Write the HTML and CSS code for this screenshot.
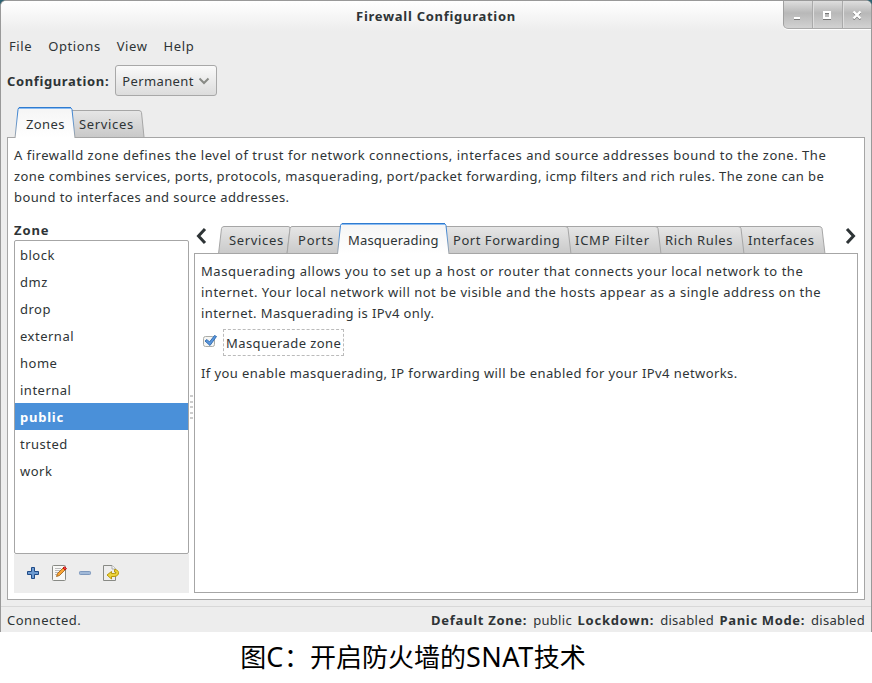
FILE: index.html
```
<!DOCTYPE html>
<html lang="zh">
<head>
<meta charset="utf-8">
<title>Firewall Configuration</title>
<link rel="stylesheet" href="styles.css">
</head>
<body>
<div class="desktop">
<main class="window">
  <header class="titlebar">
    <h1 class="title">Firewall Configuration</h1>
    <div class="controls">
      <span class="control"><svg width="10" height="10"><path d="M1 9.500h6" stroke="#777"/><path d="M1 8h6" stroke="#fff" stroke-width="2"/></svg></span>
      <span class="control"><svg width="10" height="10"><path d="M1 9.500h8M3 3.500h4" stroke="#777"/><path d="M2 2h6v6H2z" fill="none" stroke="#fff" stroke-width="2"/></svg></span>
      <span class="control"><svg width="10" height="10"><path d="M1.500 2.500l7 7m0-7l-7 7" stroke="#777" stroke-width="2"/><path d="M1.500 1.500l7 7m0-7l-7 7" stroke="#fff" stroke-width="2.400"/></svg></span>
    </div>
  </header>
  <nav class="menu"><span>File</span><span>Options</span><span>View</span><span>Help</span></nav>
  <div class="config">
    <b>Configuration:</b>
    <button class="combo"><span>Permanent</span><svg width="12" height="8"><path d="M1.500 1.500L6 6l4.500-4.500" fill="none" stroke="#888a85" stroke-width="2"/></svg></button>
  </div>
  <svg class="maintabs" width="858" height="32">
    <defs>
      <linearGradient id="tab" x2="0" y2="1"><stop stop-color="#e6e6e6"/><stop offset="1" stop-color="#c9c9c9"/></linearGradient>
      <linearGradient id="edge" x2="0" y2="1"><stop stop-color="#2f7bd0"/><stop offset=".4" stop-color="#5591d2"/><stop offset="1" stop-color="#a6a6a6"/></linearGradient>
      <linearGradient id="active" x2="0" y2="1"><stop stop-color="#f5f5f5"/><stop offset="1" stop-color="#fff"/></linearGradient>
    </defs>
    <path d="M60 31V4.500H132q2 0 2.500 2L137 31" fill="url(#tab)" stroke="#a6a6a6"/>
    <path d="M0 31.500H858" stroke="#a6a6a6"/>
    <path d="M8 32L11 3.500Q11.200 1.500 13 1.500H62Q64.500 1.500 65 3.500L68 32" fill="url(#active)" stroke="url(#edge)"/>
    <path d="M12 2.500H64" stroke="#8bbcf2"/><path d="M12 1.500H64" stroke="#2f7bd0"/>
    <text class="t-zones" x="19" y="23">Zones</text><text class="t-serv" x="72" y="23">Services</text>
  </svg>
  <section class="page">
    <p class="intro"><span class="i1">A firewalld zone defines the level of trust for network connections, interfaces and source addresses bound to the zone. The</span><br><span class="i2">zone combines services, ports, protocols, masquerading, port/packet forwarding, icmp filters and rich rules. The zone can be</span><br><span class="i3">bound to interfaces and source addresses.</span></p>
    <div class="panes">
      <aside class="side">
        <b class="zone">Zone</b>
        <ul class="zones"><li>block</li><li>dmz</li><li>drop</li><li>external</li><li>home</li><li>internal</li><li class="selected">public</li><li>trusted</li><li>work</li></ul>
        <div class="tools">
          <svg width="18" height="18" viewBox="0 0 18 18"><path d="M7.500 3.500h3v4h4v3h-4v4h-3v-4h-4v-3h4z" fill="#6d9bd1" stroke="#204a87" stroke-linejoin="round"/></svg>
          <svg width="18" height="18" viewBox="0 0 18 18"><rect x="2.500" y="1.500" width="13" height="15" rx="1" fill="#f8f8f6" stroke="#888a85"/><path d="M5 4.500h6M5 6.500h5M5 8.500h4M5 10.500h2" stroke="#bbb"/><path d="M6.500 12.500l1-3 6-6 2 2-6 6z" fill="#f9a535" stroke="#9a5a12" stroke-width=".8"/><path d="M13 4l1.500-1.300 2 2L15 6z" fill="#ef4040" stroke="#b00" stroke-width=".8"/></svg>
          <svg width="18" height="18" viewBox="0 0 18 18"><rect x="3.500" y="7.500" width="11" height="3" rx=".8" fill="#a1b9d8" stroke="#7d98bd"/></svg>
          <svg width="18" height="18" viewBox="0 0 18 18"><path d="M1.500 1.500h8.500l3.500 3.500v11.500h-12z" fill="#eee" stroke="#888a85"/><path d="M10 1.500v3.500h3.500" fill="#fff" stroke="#aaa"/><path d="M12.500 5.500c5.500 0 5.500 7-.5 7H9.500v2.500L5 11 9.500 7.500v2h3c2 0 2-1.500 0-1.500z" fill="#edd43a" stroke="#b19000" stroke-width=".9"/></svg>
        </div>
      </aside>
      <div class="grip"><i></i><i></i><i></i><i></i><i></i></div>
      <section class="detail">
        <svg class="subtabs" width="664" height="33">
          <path d="M24.500 32L27.500 6.500Q28 4.500 30 4.500H94Q96.500 4.500 96 6.500L93 32" fill="url(#tab)" stroke="#a6a6a6"/>
          <path d="M93 32L96 6.500Q96.500 4.500 98 4.500H160V32" fill="url(#tab)" stroke="#a6a6a6"/>
          <path d="M540 32V4.500H625Q627.500 4.500 628 6.500L631 32" fill="url(#tab)" stroke="#a6a6a6"/>
          <path d="M450 32V4.500H544Q546.500 4.500 547 6.500L550 32" fill="url(#tab)" stroke="#a6a6a6"/>
          <path d="M360 32V4.500H461Q463.500 4.500 464 6.500L467 32" fill="url(#tab)" stroke="#a6a6a6"/>
          <path d="M240 32V4.500H371Q373.500 4.500 374 6.500L377 32" fill="url(#tab)" stroke="#a6a6a6"/>
          <path d="M0 31.500H664" stroke="#a6a6a6"/>
          <path d="M143.500 32L146.500 3.500Q147 1.500 149 1.500H249Q251.500 1.500 252 3.500L255 32" fill="url(#active)" stroke="url(#edge)"/>
          <path d="M148 2.500H251" stroke="#8bbcf2"/><path d="M148 1.500H251" stroke="#2f7bd0"/>
          <path d="M11 7L4.500 14 11 21M653 7l6.500 7L653 21" fill="none" stroke="#2e3436" stroke-width="3"/>
          <text class="t-serv" x="35" y="23">Services</text><text class="t-ports" x="104" y="23">Ports</text><text class="t-masq" x="154" y="23">Masquerading</text><text class="t-fwd" x="259" y="23">Port Forwarding</text><text class="t-icmp" x="381" y="23">ICMP Filter</text><text class="t-rich" x="471" y="23">Rich Rules</text><text class="t-int" x="554" y="23">Interfaces</text>
        </svg>
        <div class="content">
          <p><span class="m1">Masquerading allows you to set up a host or router that connects your local network to the</span><br><span class="m2">internet. Your local network will not be visible and the hosts appear as a single address on the</span><br><span class="m3">internet. Masquerading is IPv4 only.</span></p>
          <div class="check"><svg width="17" height="17"><rect x="2.500" y="3.500" width="11" height="10" rx="2" fill="#f5f5f3" stroke="#aaaca8"/><path d="M4 8l2-1.500 2.500 2.500L13.500 2.500l2 1L9 12.500z" fill="#5a96dc" stroke="#2867ad" stroke-width=".9"/></svg><span class="focus"><span class="m4">Masquerade zone</span></span></div>
          <p><span class="m5">If you enable masquerading, IP forwarding will be enabled for your IPv4 networks.</span></p>
        </div>
      </section>
    </div>
  </section>
  <footer class="status"><span class="connected">Connected.</span><span class="right"><b class="s1">Default Zone:</b><span>public</span><b class="s2">Lockdown:</b><span>disabled</span><b class="s3">Panic Mode:</b><span>disabled</span></span></footer>
</main>
</div>
<div class="caption">图<span>C</span>：开启防火墙的<span>SNAT</span>技术</div>
</body>
</html>
```
FILE: styles.css
```
* { box-sizing: border-box; }
body { margin: 0; width: 872px; height: 683px; overflow: hidden; background: #fff; font: 13px/21px "Noto Sans", sans-serif; color: #2e3436; letter-spacing: .4px; }
p, ul { margin: 0; padding: 0; list-style: none; }
text { fill: #2e3436; }
svg { display: block; flex: none; }
.desktop { background: #2d6272; }
.window { height: 632px; border: 1px solid #999; border-bottom: 0; border-radius: 6px 6px 0 0; background: #ededed; display: flex; flex-direction: column; }
.titlebar { height: 30px; background: linear-gradient(#fff, #ededed); border-radius: 5px 5px 0 0; display: grid; grid-template-columns: 782px 88px; }
.title { margin: 0 0 0 88px; font-size: 13px; line-height: 30px; text-align: center; letter-spacing: .72px; }
.controls { height: 28px; display: flex; border-left: 1px solid #a0a0a0; border-bottom: 1px solid #aaa; border-bottom-left-radius: 5px; border-top-right-radius: 5px; background: linear-gradient(#dedede, #b8b8b8 45%, #d2d2d2); box-shadow: 0 1px #fff; overflow: hidden; }
.control { flex: 1; display: flex; align-items: center; justify-content: center; }
.control + .control { border-left: 1px solid #aaa; box-shadow: inset 1px 0 #dedede; }
.menu { height: 32px; display: flex; gap: 16px; padding: 5px 8px; letter-spacing: .6px; }
.config { height: 38px; padding: 2px 6px; display: flex; gap: 6px; line-height: 33px; }
.config b { letter-spacing: .61px; }
.combo { width: 102px; height: 31px; border: 1px solid #a8a8a8; border-radius: 3px; background: linear-gradient(#fafafa, #dcdcdc); padding: 1px 6px 0; display: flex; align-items: center; justify-content: space-between; font: inherit; letter-spacing: .4px; color: inherit; }
.maintabs { margin: 5px 0 0 6px; }
.t-serv { letter-spacing: .65px; }
.t-ports { letter-spacing: .8px; }
.t-masq { letter-spacing: .18px; }
.t-fwd { letter-spacing: .54px; }
.t-icmp { letter-spacing: .75px; }
.t-rich { letter-spacing: .6px; }
.t-int { letter-spacing: .5px; }
.page { margin: 0 6px; width: 858px; height: 462px; border: 1px solid #a6a6a6; border-top: 0; background: #fff; padding: 7px 6px 0; }
.intro { height: 77px; white-space: nowrap; }
.i1 { letter-spacing: .525px; }
.i2 { letter-spacing: .41px; }
.panes { display: flex; }
.side { width: 175px; }
.zone { display: block; height: 18px; line-height: 17px; letter-spacing: .9px; }
.zones { height: 314px; border: 1px solid #a6a6a6; border-radius: 2px; letter-spacing: .5px; }
.zones li { height: 27px; line-height: 28px; padding-left: 5px; }
.zones .selected { background: #4a90d9; color: #fff; font-weight: bold; letter-spacing: .75px; }
.tools { height: 39px; background: #ededed; display: flex; gap: 8px; padding: 10px; }
.grip { width: 5px; display: flex; flex-direction: column; gap: 3.500px; padding: 173px 0 0 1px; }
.grip i { width: 3px; height: 2px; background: #ccc; }
.detail { width: 664px; }
.subtabs { margin-bottom: -1px; }
.content { height: 339px; border: 1px solid #a6a6a6; border-top: 0; padding: 7px 6px; white-space: nowrap; }
.m1 { letter-spacing: .535px; }
.m2 { letter-spacing: .505px; }
.m5 { letter-spacing: .42px; }
.check { display: flex; gap: 5px; height: 39px; padding-top: 5px; }
.check svg { margin-top: 4px; }
.focus { height: 27px; border: 1px dashed #bbb; width: 121px; padding-left: 2px; line-height: 27px; }
.status { margin-top: 6px; height: 26px; border-top: 1px solid #d8d8d8; padding: 0 6px; line-height: 27px; display: flex; justify-content: space-between; }
.right { display: flex; gap: 6px; letter-spacing: .3px; }
.s1 { letter-spacing: .7px; }
.s2 { letter-spacing: .8px; }
.s3 { letter-spacing: .65px; }
.right span + b { margin-left: -.5px; }
.connected { letter-spacing: .5px; }
.caption { width: 826px; text-align: center; font: 26px/48px "Noto Sans CJK SC", sans-serif; letter-spacing: 0; color: #000; }
.caption span { font: 27px/40px "Noto Sans", sans-serif; letter-spacing: .5px; }
```
